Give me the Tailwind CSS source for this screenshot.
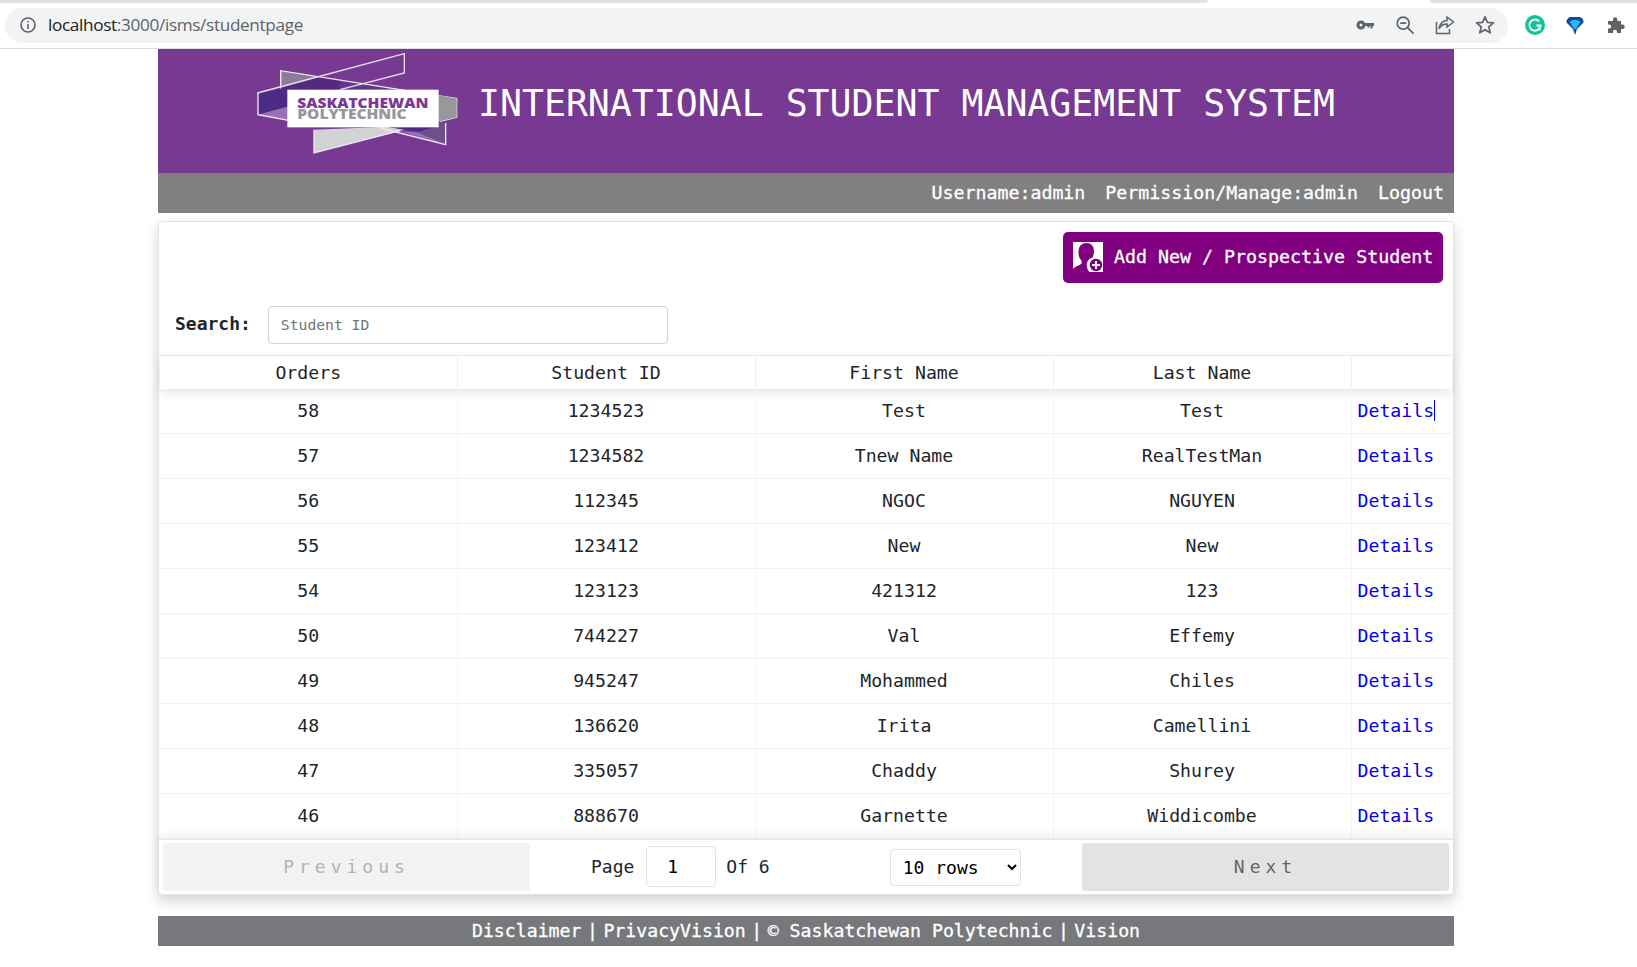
<!DOCTYPE html>
<html lang="en">
<head>
  <meta charset="UTF-8">
  <meta name="viewport" content="width=device-width, initial-scale=1.0">
  <title>ISMS - Student Page</title>
  <script src="https://cdn.jsdelivr.net/npm/@tailwindcss/browser@4"></script>
</head>
<body class="bg-white font-['DejaVu_Sans_Mono',monospace] text-[18px] text-[#212529] h-[967px] overflow-hidden">
  <!-- browser toolbar -->
  <div class="h-[3px] flex">
    <div class="w-[1208px] bg-[#dee1e6] rounded-br-[3px]"></div>
    <div class="w-[222px]"></div>
    <div class="flex-1 bg-[#dee1e6] rounded-bl-[3px]"></div>
  </div>
  <div class="h-[46px] flex items-center pl-[5px] border-b border-[#dadce0] pb-[1px] font-['Open_Sans',sans-serif]">
    <div class="w-[1503px] h-[35px] rounded-full bg-[#f1f3f4] flex items-center pl-[14px] pr-[13px]">
      <svg class="w-[18px] h-[18px]" viewBox="0 0 18 18" fill="none" stroke="#5f6368" stroke-width="1.6"><circle cx="9" cy="9" r="7"/><path d="M9 8v5M9 5v1.6"/></svg>
      <span class="ml-[11px] text-[17.2px] tracking-[-0.35px] text-[#202124]">localhost<span class="text-[#5f6368]">:3000/isms/studentpage</span></span>
      <div class="ml-auto flex items-center gap-[20px]">
        <svg class="w-[20px] h-[20px]" viewBox="0 0 20 20" fill="#5f6368"><path d="M6 5.500a4.500 4.500 0 1 1 0 9 4.500 4.500 0 0 1 0-9zm0 3a1.500 1.500 0 1 0 0 3 1.500 1.500 0 0 0 0-3z"/><path d="M10 8h9v3h-1.500v2.500h-2V11h-1v1.500h-2V11H10z"/></svg>
        <svg class="w-[20px] h-[20px]" viewBox="0 0 20 20" fill="none" stroke="#5f6368" stroke-width="1.7"><circle cx="8.200" cy="8.200" r="6"/><path d="M5.200 8.200h6M12.600 12.600l6 6"/></svg>
        <svg class="w-[20px] h-[20px]" viewBox="0 0 20 20" fill="none" stroke="#5f6368" stroke-width="1.500"><path d="M1.500 7v11.500h13V14"/><path d="M12 2l6.500 5-6.500 5V9c-4 0-6.500 1.500-8 5 .5-4.500 3-8 8-8.500z"/></svg>
        <svg class="w-[20px] h-[20px]" viewBox="0 0 20 20" fill="none" stroke="#5f6368" stroke-width="1.700" stroke-linejoin="round"><path d="M10 1.800l2.400 5.600 6 .5-4.600 4 1.400 5.900L10 14.700l-5.200 3.100 1.400-5.900-4.600-4 6-.5z"/></svg>
      </div>
    </div>
    <div class="ml-[17px] flex items-center gap-[20px]">
      <svg class="w-[20px] h-[20px]" viewBox="0 0 20 20"><circle cx="10" cy="10" r="10" fill="#15c39a"/><path d="M14.200 6.400A5.600 5.600 0 1 0 15.600 10.500H11.400" fill="none" stroke="#fff" stroke-width="1.800"/><path d="M13 13l2.500 2" stroke="#fff" stroke-width="1.800"/></svg>
      <svg class="w-[20px] h-[20px]" viewBox="0 0 20 20"><path d="M10 20L8 14 1.500 7.500Q1 4 5 2h10Q19 4 18.500 7.500L12 14z" fill="#0a4f9e"/><path d="M4.500 6.500Q10 3 15.500 6.500L11 14H9z" fill="#29b6f2"/></svg>
      <svg class="w-[20px] h-[20px]" viewBox="0 0 20 20" fill="#5f6368"><path d="M8 4.500a2.200 2.200 0 0 1 4.400 0V6H16v3.600h1.500a2.200 2.200 0 0 1 0 4.400H16V18h-4v-1.200a2 2 0 0 0-4 0V18H3v-4.500h1.200a2 2 0 0 0 0-4H3V6h5z"/></svg>
    </div>
  </div>

  <div class="w-[1296px] ml-[158px]">
    <!-- banner -->
    <header class="h-[124px] bg-[#773991] flex items-start text-white">
      <svg class="ml-[82px] -mt-px w-[230px] h-[110px] shrink-0" viewBox="0 0 690 330">
        <polygon points="122,68 240,87 122,120" fill="#8c7a9c"/>
        <polygon points="122,120 240,87 300,96 300,127 122,127" fill="#54297f"/>
        <polygon points="300,96 460,122 300,127" fill="#65358c"/>
        <polyline points="122,125 122,68 650,152 650,208 600,220" fill="none" stroke="#eceaf0" stroke-width="4"/>
        <polygon points="54,137 150,115 150,174 54,200" fill="#4d2a85"/>
        <polygon points="54,200 150,174 150,220" fill="#9a72b4"/>
        <polygon points="590,140 650,152 650,208 590,222" fill="#97989b"/>
        <polyline points="52,135 493,17 493,75 300,125" fill="none" stroke="#e4dfe9" stroke-width="4"/>
        <polyline points="54,135 54,200 150,218" fill="none" stroke="#f1eef4" stroke-width="4"/>
        <polygon points="222,245 222,315 500,244 440,236" fill="#d1d2d4"/>
        <polygon points="500,244 617,290 617,225 590,232 590,236" fill="#6f4e8c"/>
        <polygon points="440,236 590,236 530,252" fill="#4d2a85"/>
        <polygon points="480,250 530,252 617,290" fill="#9573b0"/>
        <polyline points="222,245 222,315 480,248" fill="none" stroke="#eceaf0" stroke-width="4"/>
        <polyline points="420,240 617,290 617,225" fill="none" stroke="#eceaf0" stroke-width="4"/>
        <rect x="142" y="125" width="454" height="113" fill="#fff"/>
        <text x="172" y="180" font-family="Open Sans" font-weight="800" font-size="40" fill="#773991" textLength="393" lengthAdjust="spacingAndGlyphs">SASKATCHEWAN</text>
        <text x="172" y="213" font-family="Open Sans" font-weight="800" font-size="40" fill="#97989b" textLength="328" lengthAdjust="spacingAndGlyphs">POLYTECHNIC</text>
      </svg>
      <h1 class="ml-[8px] mt-[37px] text-[36.5px] leading-none font-normal whitespace-pre">INTERNATIONAL STUDENT MANAGEMENT SYSTEM</h1>
    </header>
    <nav class="h-[40px] pb-px bg-[#808080] text-white text-[18.25px] [-webkit-text-stroke:0.3px_white] flex items-center justify-end gap-[20px] pr-[10px]">
      <a href="#">Username:admin</a>
      <a href="#">Permission/Manage:admin</a>
      <a href="#">Logout</a>
    </nav>

    <!-- student list card -->
    <main class="mt-[8px] h-[674px] bg-white rounded-[4px] border border-[#e4e4e4] shadow-[0_6px_14px_rgba(0,0,0,0.18)] flex flex-col">
      <div class="flex justify-end pt-[10px] pr-[10px]">
        <button class="w-[380px] h-[51px] pb-px bg-[#800080] rounded-[5px] text-white text-[18.3px] [-webkit-text-stroke:0.3px_white] flex items-center pl-[10px]">
          <svg class="w-[30px] h-[30px] shrink-0" viewBox="0 0 30 30">
            <rect width="30" height="30" fill="#fff"/>
            <path d="M0 30v-2.500c0-2 5-3.500 8-5.500 1-1 1-2.500 0-4-2-2-2.500-5-2.500-8C5.500 4 9 1 13.500 1S21 4 21 9.500c0 2-.5 4-1.500 6-7 2-7 10.500-3 14.500z" fill="#800080"/>
            <circle cx="23" cy="23" r="7" fill="#800080" stroke="#fff" stroke-width="1.500"/>
            <path d="M23 19v8M19 23h8" stroke="#fff" stroke-width="2"/>
          </svg>
          <span class="ml-[11px]">Add New / Prospective Student</span>
        </button>
      </div>
      <div class="flex items-center mt-[23px] pl-[16px] h-[38px]">
        <label for="search" class="font-bold -mt-[4px]">Search:</label>
        <input id="search" class="ml-[17px] w-[400px] h-[38px] pb-[2px] border border-[#ced4da] rounded-[4px] px-[12px] text-[14.7px] placeholder:text-[#6c757d]" placeholder="Student ID">
      </div>
      <table class="mt-[11px] ml-px w-[1292px] table-fixed border-collapse text-[18.2px]">
        <colgroup>
          <col class="w-[297px]"><col class="w-[298px]"><col class="w-[298px]"><col class="w-[298px]"><col>
        </colgroup>
        <thead>
          <tr class="h-[33px] border-t border-[#e8e8e8] shadow-[0_4px_12px_rgba(0,0,0,0.10)]">
            <th class="font-normal border-r border-[#f0f0f0] pt-px">Orders</th>
            <th class="font-normal border-r border-[#f0f0f0] pt-px">Student ID</th>
            <th class="font-normal border-r border-[#f0f0f0] pt-px">First Name</th>
            <th class="font-normal border-r border-[#f0f0f0] pt-px">Last Name</th>
            <th></th>
          </tr>
        </thead>
        <tbody class="text-center">
          <tr class="h-[45px] border-b border-[#f0f0f0]"><td class="border-r border-[#f4f4f4]">58</td><td class="border-r border-[#f4f4f4]">1234523</td><td class="border-r border-[#f4f4f4]">Test</td><td class="border-r border-[#f4f4f4]">Test</td><td class="text-left pl-[6px]"><a href="#" class="text-[#0000ee] border-r border-[#0000ee]">Details</a></td></tr>
          <tr class="h-[45px] border-b border-[#f0f0f0]"><td class="border-r border-[#f4f4f4]">57</td><td class="border-r border-[#f4f4f4]">1234582</td><td class="border-r border-[#f4f4f4]">Tnew Name</td><td class="border-r border-[#f4f4f4]">RealTestMan</td><td class="text-left pl-[6px]"><a href="#" class="text-[#0000ee]">Details</a></td></tr>
          <tr class="h-[45px] border-b border-[#f0f0f0]"><td class="border-r border-[#f4f4f4]">56</td><td class="border-r border-[#f4f4f4]">112345</td><td class="border-r border-[#f4f4f4]">NGOC</td><td class="border-r border-[#f4f4f4]">NGUYEN</td><td class="text-left pl-[6px]"><a href="#" class="text-[#0000ee]">Details</a></td></tr>
          <tr class="h-[45px] border-b border-[#f0f0f0]"><td class="border-r border-[#f4f4f4]">55</td><td class="border-r border-[#f4f4f4]">123412</td><td class="border-r border-[#f4f4f4]">New</td><td class="border-r border-[#f4f4f4]">New</td><td class="text-left pl-[6px]"><a href="#" class="text-[#0000ee]">Details</a></td></tr>
          <tr class="h-[45px] border-b border-[#f0f0f0]"><td class="border-r border-[#f4f4f4]">54</td><td class="border-r border-[#f4f4f4]">123123</td><td class="border-r border-[#f4f4f4]">421312</td><td class="border-r border-[#f4f4f4]">123</td><td class="text-left pl-[6px]"><a href="#" class="text-[#0000ee]">Details</a></td></tr>
          <tr class="h-[45px] border-b border-[#f0f0f0]"><td class="border-r border-[#f4f4f4]">50</td><td class="border-r border-[#f4f4f4]">744227</td><td class="border-r border-[#f4f4f4]">Val</td><td class="border-r border-[#f4f4f4]">Effemy</td><td class="text-left pl-[6px]"><a href="#" class="text-[#0000ee]">Details</a></td></tr>
          <tr class="h-[45px] border-b border-[#f0f0f0]"><td class="border-r border-[#f4f4f4]">49</td><td class="border-r border-[#f4f4f4]">945247</td><td class="border-r border-[#f4f4f4]">Mohammed</td><td class="border-r border-[#f4f4f4]">Chiles</td><td class="text-left pl-[6px]"><a href="#" class="text-[#0000ee]">Details</a></td></tr>
          <tr class="h-[45px] border-b border-[#f0f0f0]"><td class="border-r border-[#f4f4f4]">48</td><td class="border-r border-[#f4f4f4]">136620</td><td class="border-r border-[#f4f4f4]">Irita</td><td class="border-r border-[#f4f4f4]">Camellini</td><td class="text-left pl-[6px]"><a href="#" class="text-[#0000ee]">Details</a></td></tr>
          <tr class="h-[45px] border-b border-[#f0f0f0]"><td class="border-r border-[#f4f4f4]">47</td><td class="border-r border-[#f4f4f4]">335057</td><td class="border-r border-[#f4f4f4]">Chaddy</td><td class="border-r border-[#f4f4f4]">Shurey</td><td class="text-left pl-[6px]"><a href="#" class="text-[#0000ee]">Details</a></td></tr>
          <tr class="h-[44px]"><td class="border-r border-[#f4f4f4]">46</td><td class="border-r border-[#f4f4f4]">888670</td><td class="border-r border-[#f4f4f4]">Garnette</td><td class="border-r border-[#f4f4f4]">Widdicombe</td><td class="text-left pl-[6px]"><a href="#" class="text-[#0000ee]">Details</a></td></tr>
        </tbody>
      </table>
      <!-- pagination -->
      <div class="relative flex-1 flex items-center px-[4px] border-t-2 border-[#e8e8e8] shadow-[0_-4px_8px_rgba(0,0,0,0.05)]">
        <button disabled class="w-[367px] h-[48px] rounded-[3px] bg-[#f2f2f2] text-[#b3b3b3] tracking-[5px]">Previous</button>
        <div class="ml-[61px] flex items-center">
          <span>Page</span>
          <input value="1" class="ml-[12px] w-[70px] h-[41px] border border-[#e2e2e2] rounded-[4px] pl-[20px] text-black">
          <span class="ml-[10px]">Of 6</span>
        </div>
        <select class="ml-[120px] mt-[2px] w-[131px] h-[37px] border border-[#e2e2e2] rounded-[4px] pl-[8px] bg-white text-black">
          <option>10 rows</option>
        </select>
        <button class="ml-auto w-[367px] h-[48px] rounded-[3px] bg-[#e3e3e3] text-[#666] tracking-[5px]">Next</button>
      </div>
    </main>

    <footer class="mt-[21px] h-[30px] pb-px bg-[#77787b] text-white text-[18.2px] [-webkit-text-stroke:0.3px_white] flex items-center justify-center gap-[5.5px]">
      <span>Disclaimer</span><span>|</span><span>PrivacyVision</span><span>|</span><span>© Saskatchewan Polytechnic</span><span>|</span><span>Vision</span>
    </footer>
  </div>
</body>
</html>
